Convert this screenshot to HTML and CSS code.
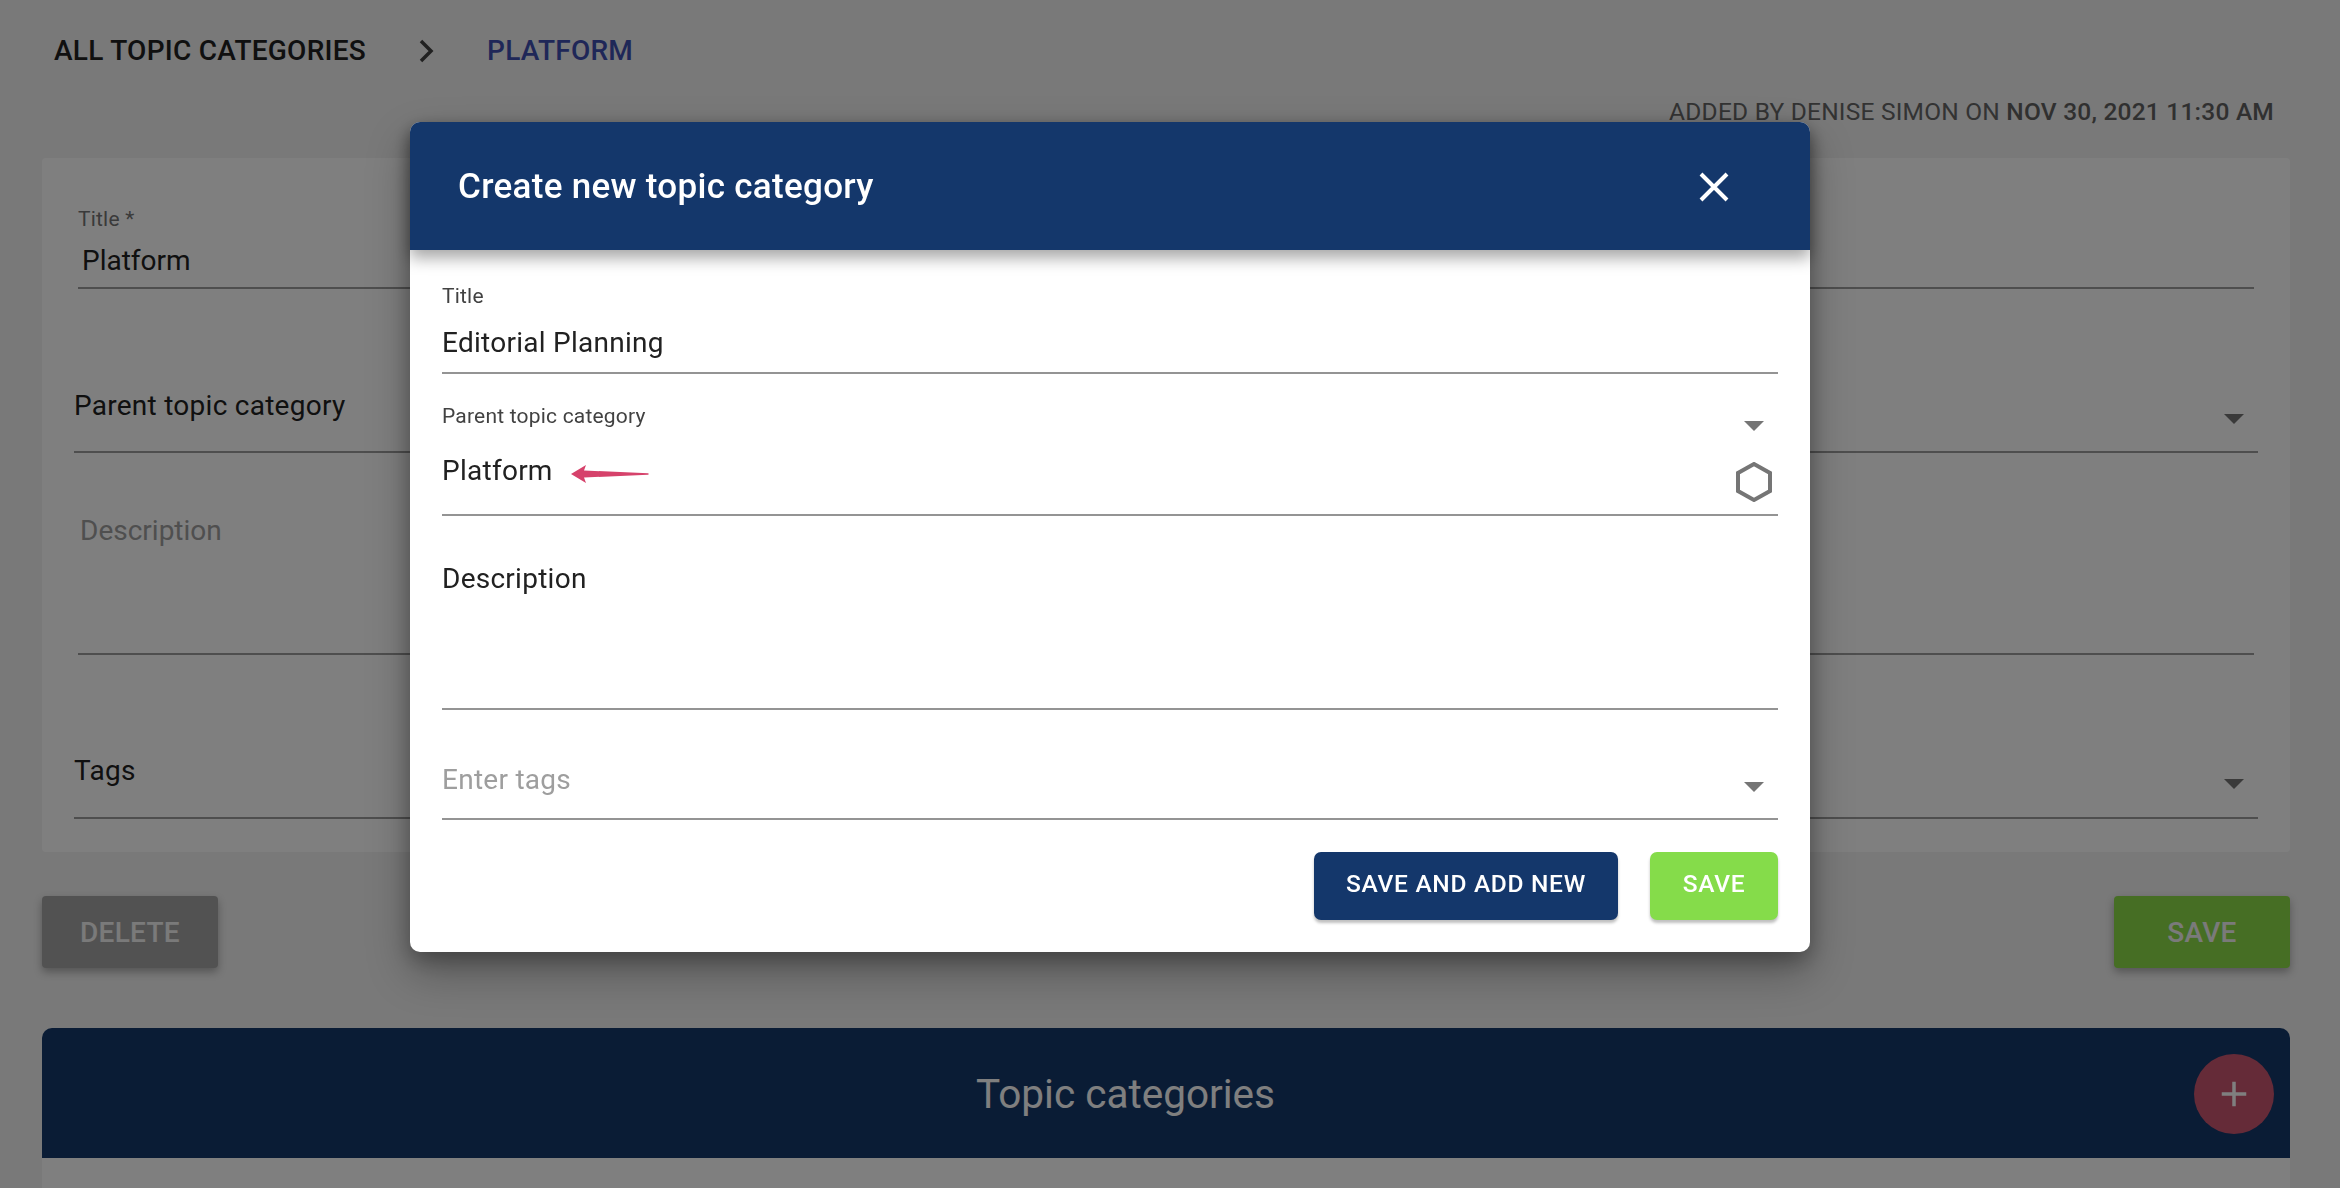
FILE: index.html
```html
<!DOCTYPE html>
<html lang="en">
<head>
<meta charset="utf-8">
<title>Topic categories</title>
<link rel="stylesheet" href="styles.css">
</head>
<body>
<main class="page">
  <nav class="crumbs">
    <span class="crumb">ALL TOPIC CATEGORIES</span>
    <svg class="crumb-sep" viewBox="0 0 16 24"><path d="M3 2l10 10L3 22" fill="none" stroke="#424242" stroke-width="3.5"/></svg>
    <span class="crumb crumb-current">PLATFORM</span>
  </nav>
  <p class="meta">ADDED BY DENISE SIMON ON <strong>NOV 30, 2021 11:30 AM</strong></p>
  <section class="card form-card">
    <div class="bg-field bg-title">
      <label class="bg-label">Title *</label>
      <div class="bg-value">Platform</div>
    </div>
    <div class="bg-field bg-select bg-parent">
      <span class="bg-select-text">Parent topic category</span>
      <span class="tri tri-dark"></span>
    </div>
    <div class="bg-field bg-desc"><span class="bg-placeholder">Description</span></div>
    <div class="bg-field bg-select bg-tags">
      <span class="bg-select-text">Tags</span>
      <span class="tri tri-dark"></span>
    </div>
  </section>
  <div class="actions">
    <button class="btn btn-delete">DELETE</button>
    <button class="btn btn-save">SAVE</button>
  </div>
  <section class="list">
    <header class="list-head">
      <h2 class="list-title">Topic categories</h2>
      <button class="fab" aria-label="Add"><svg viewBox="0 0 24 24" width="42" height="42"><path d="M19 13h-6v6h-2v-6H5v-2h6V5h2v6h6z" fill="#fff"/></svg></button>
    </header>
    <div class="list-body"></div>
  </section>
</main>
<div class="overlay"></div>
<div class="modal">
  <header class="modal-head">
    <h1 class="modal-title">Create new topic category</h1>
    <svg class="close" viewBox="0 0 30 30"><path d="M2 2l26 26M28 2L2 28" stroke="#fff" stroke-width="4" fill="none"/></svg>
  </header>
  <div class="modal-body">
    <div class="f f-title">
      <label class="f-label">Title</label>
      <div class="f-value">Editorial Planning</div>
    </div>
    <div class="f f-parent">
      <label class="f-label">Parent topic category</label>
      <span class="tri tri-parent"></span>
      <div class="f-value chip-row">
        <span>Platform</span>
        <svg class="pointer" viewBox="0 0 78 18"><path d="M0 9L15 0l-2 5.500L77 8.300a.7.7 0 0 1 0 1.400L13 12.500l2 5.500z" fill="#d6426b"/></svg>
        <svg class="hex" viewBox="0 0 36 40"><path d="M18 2l16 9v18l-16 9L2 29V11z" fill="none" stroke="#757575" stroke-width="4"/></svg>
      </div>
    </div>
    <div class="f f-desc"><div class="f-value">Description</div></div>
    <div class="f f-tags">
      <div class="f-placeholder">Enter tags</div>
      <span class="tri tri-tags"></span>
    </div>
    <div class="modal-actions">
      <button class="mbtn mbtn-navy">SAVE AND ADD NEW</button>
      <button class="mbtn mbtn-green">SAVE</button>
    </div>
  </div>
</div>
</body>
</html>
```
FILE: styles.css
```css
* { box-sizing: border-box; }
html, body { margin: 0; height: 1188px; overflow: hidden; }
body { background: #f2f2f2; font-family: Roboto, "Liberation Sans", sans-serif; color: #212121; }

.page { padding: 0 50px 0 42px; height: 1188px; display: flex; flex-direction: column; }

.crumbs { height: 100px; display: flex; align-items: center; padding: 1px 0 0 12px; color: #1d1d1d; }
.crumb { font-size: 28px; font-weight: 500; line-height: 100px; letter-spacing: .26px; color: #212121; }
.crumb.crumb-current { color: #3f4fb0; }
.crumb-sep { width: 16px; height: 24px; margin: 0 53px 0 52px; }

.meta { margin: 0; height: 58px; padding: 0 16px 0 0; text-align: right; font-size: 24.500px; line-height: 24px; color: #666; letter-spacing: .22px; }
.meta strong { font-weight: 500; color: #616161; }

.card { background: #fff; border-radius: 4px; }
.form-card { height: 694px; padding: 0 32px; display: flex; flex-direction: column; }
.bg-field { position: relative; }
.bg-title { height: 131px; margin: 0 4px; padding-top: 49px; border-bottom: 2px solid #9c9c9c; }
.bg-label { display: block; font-size: 21px; line-height: 24px; color: #757575; letter-spacing: .2px; }
.bg-value { font-size: 28px; line-height: 40px; padding: 10px 4px 0; color: #212121; }
.bg-select { display: flex; justify-content: space-between; align-items: flex-start; padding: 0 14px 0 0; border-bottom: 2px solid #9c9c9c; }
.bg-select-text { font-size: 28px; line-height: 36px; color: #212121; letter-spacing: .26px; }
.bg-select .tri { margin-top: 26px; }
.bg-parent { height: 164px; padding-top: 99px; }
.bg-desc { height: 202px; margin: 0 4px; padding-top: 60px; border-bottom: 2px solid #9c9c9c; }
.bg-placeholder { font-size: 28px; line-height: 36px; color: #9e9e9e; margin-left: 2px; }
.bg-tags { height: 164px; padding-top: 98px; }

.tri { display: block; width: 0; height: 0; border-left: 10px solid transparent; border-right: 10px solid transparent; border-top: 10px solid #757575; }

.actions { height: 176px; padding-top: 44px; display: flex; justify-content: space-between; align-items: flex-start; }
.btn { height: 72px; border: 0; border-radius: 4px; font: 500 28px Roboto, sans-serif; letter-spacing: .3px; box-shadow: 0 4px 8px rgba(0,0,0,.3); color: #fff; }
.btn-delete { width: 176px; background: #a5a5a5; color: #f5f5f5; }
.btn-save { width: 176px; background: #8cdc48; color: #f5f5f5; }

.list { flex: 1; display: flex; flex-direction: column; }
.list-head { position: relative; height: 130px; padding: 3px 81px 0 0; background: #14386b; border-radius: 10px 10px 0 0; display: flex; align-items: center; justify-content: center; }
.list-title { margin: 0; font-size: 40.500px; font-weight: 400; color: #fff; line-height: 127px; }
.fab { position: absolute; top: 26px; right: 16px; width: 80px; height: 80px; border: 0; border-radius: 50%; padding: 0; background: #cb5670; display: flex; align-items: center; justify-content: center; }
.list-body { flex: 1; background: #fff; }

.overlay { position: fixed; inset: 0; background: rgba(0,0,0,.5); }

.modal { position: absolute; left: 410px; top: 122px; width: 1400px; height: 830px; background: #fff; border-radius: 10px; box-shadow: 0 20px 44px rgba(0,0,0,.3), 0 8px 20px rgba(0,0,0,.25); display: flex; flex-direction: column; }
.modal-head { height: 128px; flex: none; background: #14376b; border-radius: 10px 10px 0 0; display: flex; align-items: center; justify-content: space-between; padding: 1px 81px 0 48px; box-shadow: 0 8px 16px rgba(0,0,0,.35); position: relative; }
.modal-title { margin: 0; font-size: 35px; font-weight: 500; color: #fff; line-height: 127px; letter-spacing: .3px; }
.close { width: 30px; height: 30px; }

.modal-body { flex: 1; padding: 0 32px; display: flex; flex-direction: column; }
.f { position: relative; border-bottom: 2px solid #949494; }
.f-label { display: block; font-size: 21px; line-height: 24px; color: #424242; letter-spacing: .2px; }
.f-value { font-size: 28px; line-height: 40px; color: #212121; letter-spacing: .26px; }
.f-title { height: 124px; padding-top: 34px; }
.f-title .f-value { padding-top: 15px; }
.f-parent { height: 142px; padding-top: 30px; }
.f-parent .f-label { height: 24px; }
.chip-row { display: flex; align-items: flex-start; height: 44px; margin-top: 20px; }
.chip-row span { line-height: 46px; }
.pointer { width: 78px; height: 18px; margin: 17px 0 0 18px; }
.hex { width: 36px; height: 40px; margin: 14px 6px 0 auto; }
.tri-parent { position: absolute; top: 47px; right: 14px; }
.f-desc { height: 194px; padding-top: 43px; }
.f-tags { height: 110px; padding-top: 62px; display: flex; justify-content: space-between; }
.f-placeholder { font-size: 28px; line-height: 36px; color: #9e9e9e; margin-top: -10px; letter-spacing: .26px; }
.tri-tags { margin: 10px 14px 0 0; }

.modal-actions { display: flex; justify-content: flex-end; gap: 32px; padding-top: 32px; }
.mbtn { height: 68px; border: 0; border-radius: 7px; font: 500 24.500px Roboto, sans-serif; letter-spacing: .7px; color: #fff; box-shadow: 0 3px 3px rgba(0,0,0,.25); padding-bottom: 6px; }
.mbtn-navy { width: 304px; background: #14376b; }
.mbtn-green { width: 128px; background: #85dc4a; }
```
